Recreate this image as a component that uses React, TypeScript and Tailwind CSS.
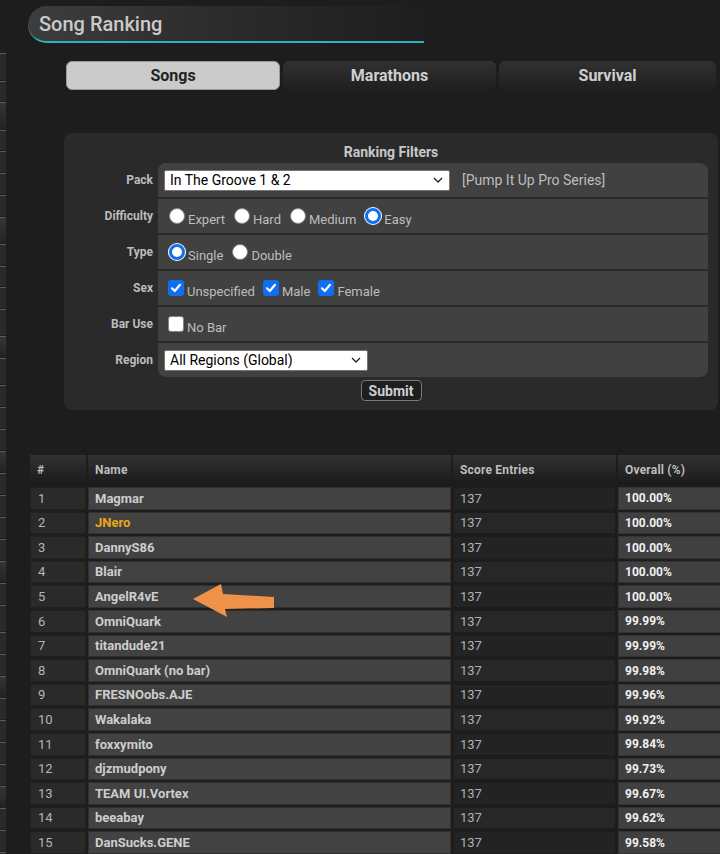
import type { ReactNode } from 'react';
import clsx from 'clsx';

type Row = {
	rank: number;
	name: string;
	entries: number;
	overall: string;
	highlight?: boolean;
};

const rows: Row[] = [
	{ rank: 1, name: 'Magmar', entries: 137, overall: '100.00%' },
	{ rank: 2, name: 'JNero', entries: 137, overall: '100.00%', highlight: true },
	{ rank: 3, name: 'DannyS86', entries: 137, overall: '100.00%' },
	{ rank: 4, name: 'Blair', entries: 137, overall: '100.00%' },
	{ rank: 5, name: 'AngelR4vE', entries: 137, overall: '100.00%' },
	{ rank: 6, name: 'OmniQuark', entries: 137, overall: '99.99%' },
	{ rank: 7, name: 'titandude21', entries: 137, overall: '99.99%' },
	{ rank: 8, name: 'OmniQuark (no bar)', entries: 137, overall: '99.98%' },
	{ rank: 9, name: 'FRESNOobs.AJE', entries: 137, overall: '99.96%' },
	{ rank: 10, name: 'Wakalaka', entries: 137, overall: '99.92%' },
	{ rank: 11, name: 'foxxymito', entries: 137, overall: '99.84%' },
	{ rank: 12, name: 'djzmudpony', entries: 137, overall: '99.73%' },
	{ rank: 13, name: 'TEAM UI.Vortex', entries: 137, overall: '99.67%' },
	{ rank: 14, name: 'beeabay', entries: 137, overall: '99.62%' },
	{ rank: 15, name: 'DanSucks.GENE', entries: 137, overall: '99.58%' },
];

// heights of the clipped sidebar buttons on the far left
const stripSegments = [27, 20, 27, 20, 21, 21, 21, 26, 21, 20, 21, 26, 21, 26, 21, 21, 21, 21, 21, 21, 21, 21, 21, 21, 26, 21, 21, 21, 21, 21, 21, 21, 21, 21, 21, 21, 21, 21];

function Radio({ checked }: { checked?: boolean }) {
	return (
		<span
			className={clsx(
				'inline-block h-[16px] w-[16px] shrink-0 rounded-full bg-white',
				checked ? 'border-[3px] border-[#1170f0] shadow-[0_0_0_1px_#ffffff]' : 'border border-[#858585]',
			)}
		/>
	);
}

function Checkbox({ checked }: { checked?: boolean }) {
	if (!checked) {
		return <span className="inline-block h-[16px] w-[16px] shrink-0 rounded-[3px] border border-[#858585] bg-white" />;
	}
	return (
		<span className="inline-flex h-[16px] w-[16px] shrink-0 items-center justify-center rounded-[3px] bg-[#0f6ef2]">
			<svg width="12" height="12" viewBox="0 0 12 12">
				<path d="M2 6.3 L4.8 9 L10 2.8" fill="none" stroke="white" strokeWidth="2.2" strokeLinecap="round" strokeLinejoin="round" />
			</svg>
		</span>
	);
}

function Option({ control, label }: { control: ReactNode; label: string }) {
	return (
		<span className="flex items-center">
			{control}
			<span className="mt-[8px] ml-[3px] text-[13px] leading-[16px] text-[#bdbdbd]">{label}</span>
		</span>
	);
}

function FakeSelect({ value, width }: { value: string; width: string }) {
	return (
		<div
			className={clsx(
				'flex h-[21px] items-center justify-between rounded-[2px] border border-[#767676] bg-white pr-[6px] pl-[5px] text-[14px] text-black',
				width,
			)}
		>
			<span>{value}</span>
			<svg width="10" height="6" viewBox="0 0 10 6">
				<path d="M1 1 L5 5 L9 1" fill="none" stroke="#222" strokeWidth="1.3" />
			</svg>
		</div>
	);
}

function FilterRow({
	label,
	children,
	pad = 'pl-[11px]',
	corner,
}: {
	label: string;
	children: ReactNode;
	pad?: string;
	corner?: string;
}) {
	return (
		<>
			<div className="flex items-center justify-end pr-[5px] text-[12px] font-bold text-[#bcbcbc]">{label}</div>
			<div className={clsx('flex items-center bg-[#414141]', pad, corner)}>{children}</div>
		</>
	);
}

function Tab({ label, active }: { label: string; active?: boolean }) {
	return (
		<div
			className={clsx(
				'flex h-[29px] items-center justify-center rounded-[6px] text-[16px] font-bold',
				active
					? 'border border-[#9a9a9a] bg-[#cbcbcb] text-[#222222]'
					: 'bg-linear-to-b from-[#313131] to-[#1f1f1f] text-[#cfcfcf]',
			)}
		>
			{label}
		</div>
	);
}

export default function App() {
	return (
		<div className="relative flex h-[854px] w-[720px] overflow-hidden bg-[#1d1d1d] font-['Roboto','Liberation_Sans',sans-serif]">
			{/* clipped sidebar */}
			<div className="flex w-[6px] shrink-0 flex-col gap-[1px] pt-[53px]">
				{stripSegments.map((h, i) => (
					<div
						key={i}
						style={{ height: h }}
						className={clsx(
							'shrink-0 border-t border-[#5a5a5a]',
							i % 5 === 2 ? 'bg-linear-to-b from-[#353535] to-[#232323]' : 'bg-[#2a2a2a]',
						)}
					/>
				))}
			</div>

			<div className="flex min-w-0 flex-1 flex-col">
				<div className="mt-[6px] ml-[22px] flex h-[39px] w-[396px] items-center rounded-l-[20px] border-b-2 border-[#2cb3bb] bg-linear-to-r from-[#3d3d3d] via-[#2b2b2b] to-[#1e1e1e] pl-[11px]">
					<h1 className="text-[20px] font-medium text-[#cacaca]">Song Ranking</h1>
				</div>

				<div className="mt-[18px] ml-[60px] grid w-[650px] grid-cols-[214px_213px_217px] gap-[3px]">
					<Tab label="Songs" active />
					<Tab label="Marathons" />
					<Tab label="Survival" />
				</div>

				<section className="mt-[43px] ml-[58px] w-[654px] rounded-[8px] bg-[#2a2a2a] px-[10px] pt-[9px] pb-[9px]">
					<h2 className="h-[21px] text-center text-[14px] leading-[20px] font-bold text-[#c8c8c8]">Ranking Filters</h2>
					<div className="grid grid-cols-[84px_1fr] auto-rows-[34px] gap-y-[2px]">
						<FilterRow label="Pack" pad="pl-[6px]" corner="rounded-t-[8px]">
							<FakeSelect value="In The Groove 1 & 2" width="w-[286px]" />
							<span className="ml-[12px] text-[14px] text-[#bdbdbd]">[Pump It Up Pro Series]</span>
						</FilterRow>
						<FilterRow label="Difficulty">
							<div className="flex gap-x-[9px]">
								<Option control={<Radio />} label="Expert" />
								<Option control={<Radio />} label="Hard" />
								<Option control={<Radio />} label="Medium" />
								<Option control={<Radio checked />} label="Easy" />
							</div>
						</FilterRow>
						<FilterRow label="Type">
							<div className="flex gap-x-[9px]">
								<Option control={<Radio checked />} label="Single" />
								<Option control={<Radio />} label="Double" />
							</div>
						</FilterRow>
						<FilterRow label="Sex" pad="pl-[10px]">
							<div className="flex gap-x-[8px]">
								<Option control={<Checkbox checked />} label="Unspecified" />
								<Option control={<Checkbox checked />} label="Male" />
								<Option control={<Checkbox checked />} label="Female" />
							</div>
						</FilterRow>
						<FilterRow label="Bar Use" pad="pl-[10px]">
							<Option control={<Checkbox />} label="No Bar" />
						</FilterRow>
						<FilterRow label="Region" pad="pl-[6px]" corner="rounded-b-[8px]">
							<FakeSelect value="All Regions (Global)" width="w-[204px]" />
						</FilterRow>
					</div>
					<div className="mt-[3px] flex justify-center">
						<button className="h-[21px] w-[61px] rounded-[4px] border border-[#7a7a7a] bg-[#1e1e1e] text-[14px] leading-[18px] font-bold text-[#cfcfcf]">
							Submit
						</button>
					</div>
				</section>

				<div className="mt-[45px] ml-[24px] grid w-[800px] grid-cols-[56px_363px_163px_200px] gap-x-[2px] gap-y-[2px] text-[13px]">
					{['#', 'Name', 'Score Entries', 'Overall (%)'].map((h) => (
						<div
							key={h}
							className="flex h-[30px] items-center bg-linear-to-b from-[#323232] via-[#262626] to-[#1a1a1a] pl-[7px] text-[12px] font-bold tracking-[0.2px] text-[#bdbdbd]"
						>
							{h}
						</div>
					))}
					{rows.map((r) => (
						<div key={r.rank} className="contents">
							<div className="flex h-[22.6px] items-center border border-[#202020] bg-[#2a2a2a] pl-[7px] text-[#b5b5b5]">
								{r.rank}
							</div>
							<div
								className={clsx(
									'flex h-[22.6px] items-center border border-[#303030] bg-[#424242] pl-[6px] font-bold',
									r.highlight ? 'text-[#e9a61a]' : 'text-[#cdcdcd]',
								)}
							>
								{r.name}
							</div>
							<div
								className={clsx(
									'flex h-[22.6px] items-center border border-[#1c1c1c] pl-[6px] text-[#b0b0b0]',
									r.rank % 2 ? 'bg-[#232323]' : 'bg-[#272727]',
								)}
							>
								{r.entries}
							</div>
							<div className="flex h-[22.6px] items-center border border-[#333333] bg-[#404040] pl-[6px] text-[12px] font-bold text-[#f0f0f0]">
								{r.overall}
							</div>
						</div>
					))}
				</div>
			</div>

			<svg className="pointer-events-none absolute top-0 left-0" width="720" height="854" viewBox="0 0 720 854">
				<polygon points="193,599 221,584 223,594 274,597 274,608 225,609 227,617" fill="#f0914a" />
			</svg>
		</div>
	);
}
